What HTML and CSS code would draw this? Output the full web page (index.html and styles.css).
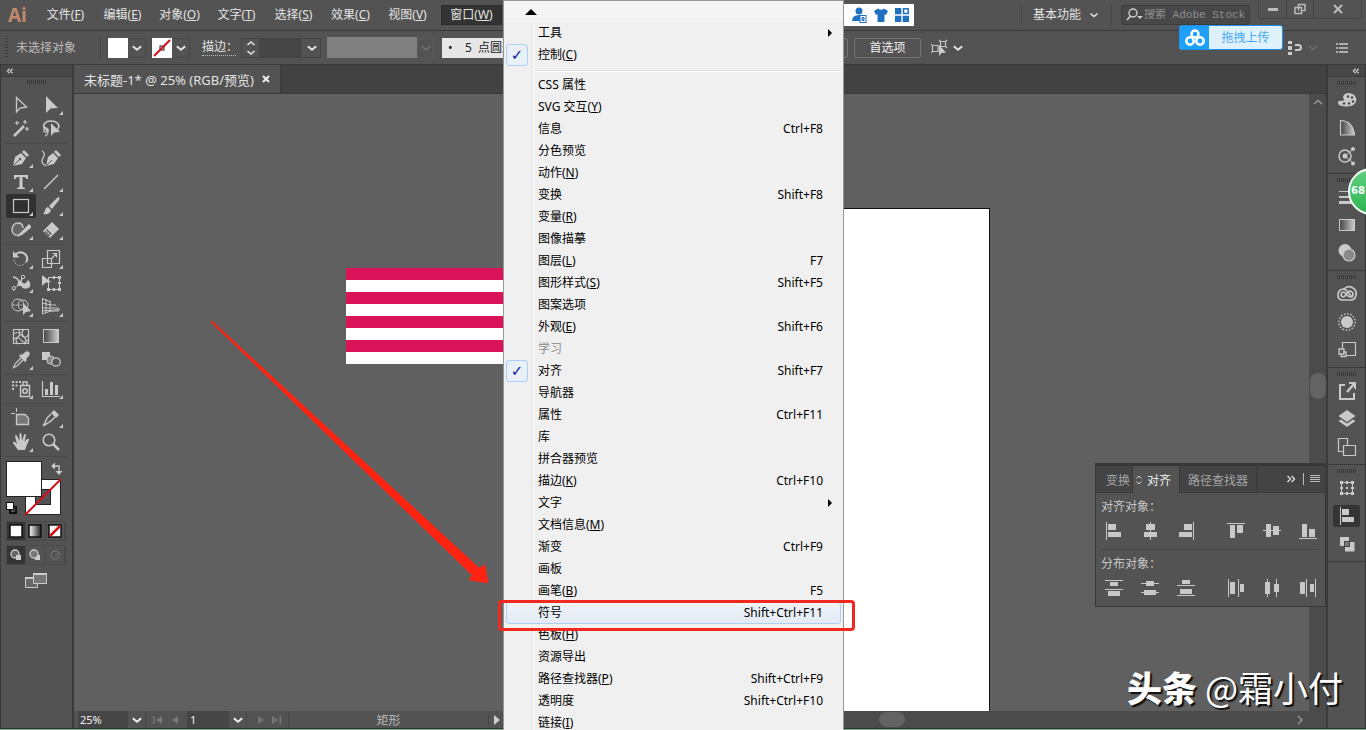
FILE: index.html
```html
<!DOCTYPE html>
<html lang="zh-CN">
<head>
    <meta charset="UTF-8">
    <meta name="viewport" content="width=device-width, initial-scale=1.0">
    <title>未标题-1</title>
    <link rel="stylesheet" href="styles.css">
</head>
<body>

    <!-- Shared shapes -->
    <svg class="defs" aria-hidden="true">
        <symbol id="chevron" viewBox="0 0 10 10"><path d="M1.5 3.5L5 6.5L8.5 3.5" fill="none" stroke="currentColor" stroke-width="1.6"/></symbol>
        <symbol id="collapse" viewBox="0 0 10 8"><path d="M4.5 1L1.5 4L4.5 7M8.5 1L5.5 4L8.5 7" fill="none" stroke="currentColor" stroke-width="1.6"/></symbol>
        <linearGradient id="fade" x1="0" x2="1"><stop offset="0" stop-color="#444"/><stop offset="1" stop-color="#ccc"/></linearGradient>
        <linearGradient id="fadeLight" x1="0" x2="1"><stop offset="0" stop-color="#fff"/><stop offset="1" stop-color="#222"/></linearGradient>
    </svg>

    <div class="app">

        <!-- Menu bar -->
        <header class="menubar">
            <span class="logo">Ai</span>
            <nav class="menus">
                <button>文件(<u>F</u>)</button>
                <button>编辑(<u>E</u>)</button>
                <button>对象(<u>O</u>)</button>
                <button>文字(<u>T</u>)</button>
                <button>选择(<u>S</u>)</button>
                <button>效果(<u>C</u>)</button>
                <button>视图(<u>V</u>)</button>
                <button class="open">窗口(<u>W</u>)</button>
            </nav>
            <div class="ime">
                <svg width="16" height="16" viewBox="0 0 16 16"><rect x="0" y="2" width="13" height="12" rx="2" fill="#1f70c1"/></svg>
                <svg width="16" height="16" viewBox="0 0 16 16"><circle cx="7" cy="4" r="3.5" fill="#1f70c1"/><path d="M0 14Q0 8 7 8Q12 8 13 10V14Z" fill="#1f70c1"/><rect x="8" y="8.5" width="6" height="7" fill="#fff" stroke="#1f70c1"/><path d="M10 10.5H12V13.5H10ZM10 12H12" fill="none" stroke="#1f70c1"/></svg>
                <svg width="16" height="16" viewBox="0 0 16 16"><path d="M1 4L5 1.5Q8 4 11 1.5L15 4L13 8L11.5 7.3V15H4.5V7.3L3 8Z" fill="#1f70c1"/></svg>
                <svg width="16" height="16" viewBox="0 0 16 16"><path d="M1 1H7.3V7.3H1ZM1 8.7H7.3V15H1ZM8.7 8.7H15V15H8.7Z" fill="#1f70c1"/><rect x="9.5" y="1.8" width="4.7" height="4.7" fill="none" stroke="#1f70c1" stroke-width="1.5"/></svg>
            </div>
            <button class="workspace-switch">基本功能 <svg width="10" height="10"><use href="#chevron"/></svg></button>
            <label class="search">
                <svg width="18" height="14" viewBox="0 0 18 14"><circle cx="7" cy="5" r="4" fill="none" stroke="currentColor" stroke-width="1.4"/><path d="M4.5 8L1 12" stroke="currentColor" stroke-width="1.6"/><path d="M11 8H17L14 11Z" fill="currentColor"/></svg>
                <input type="text" placeholder="搜索 Adobe Stock" aria-label="搜索 Adobe Stock">
            </label>
            <div class="window-buttons">
                <button aria-label="最小化"><svg width="12" height="12" viewBox="0 0 12 12"><rect x="1" y="5" width="10" height="3" fill="currentColor"/></svg></button>
                <button aria-label="还原"><svg width="12" height="12" viewBox="0 0 12 12"><path d="M4.5 7.5V1.5H11V7.5H8.5M1 4.5H7.5V10.5H1Z" fill="none" stroke="currentColor" stroke-width="1.5"/></svg></button>
                <button aria-label="关闭"><svg width="12" height="12" viewBox="0 0 12 12"><path d="M2 2L10 10M10 2L2 10" stroke="currentColor" stroke-width="2"/></svg></button>
            </div>
        </header>

        <!-- Control bar -->
        <div class="control-bar">
            <span class="grip-v"></span>
            <span class="selection">未选择对象</span>
            <button class="swatch" aria-label="填色">
                <svg width="20" height="20"><rect width="20" height="20" fill="#fff"/></svg>
                <svg width="12" height="12"><use href="#chevron"/></svg>
            </button>
            <button class="swatch" aria-label="描边颜色">
                <svg width="20" height="20"><rect width="20" height="20" fill="#fff"/><rect x="8" y="8" width="4" height="4" fill="none" stroke="#222"/><path d="M2 18L18 2" stroke="#d4101c" stroke-width="2"/></svg>
                <svg width="12" height="12"><use href="#chevron"/></svg>
            </button>
            <label class="stroke-label" for="strokeWidth">描边：</label>
            <div class="stroke-field">
                <button class="stepper" aria-label="步进"><svg width="10" height="16" viewBox="0 0 10 16"><path d="M1.5 5L5 2L8.5 5M1.5 11L5 14L8.5 11" fill="none" stroke="currentColor" stroke-width="1.6"/></svg></button>
                <input type="text" id="strokeWidth">
                <button class="drop" aria-label="描边粗细"><svg width="12" height="12"><use href="#chevron"/></svg></button>
            </div>
            <div class="profile"></div>
            <button class="drop off" aria-label="变量宽度配置文件" disabled><svg width="12" height="12"><use href="#chevron"/></svg></button>
            <select class="brush" aria-label="画笔定义"><option>•&nbsp;&nbsp;&nbsp;&nbsp;5&nbsp;&nbsp;点圆形</option></select>
            <button class="outline-btn" aria-label="文档设置"></button>
            <button class="outline-btn">首选项</button>
            <button class="plain" aria-label="选择类似对象">
                <svg width="18" height="18" viewBox="0 0 18 18"><path d="M1.5 6.5H7V12.5H1.5ZM9.5 2.5H14.5V7.5H9.5ZM0 5L2 7M0 14L2 12M14.5 2.5L16 1M9.5 2.5L8 1M14.5 7.5L16 9" fill="none" stroke="#c4c4c4" stroke-width="1.2"/><path d="M8 6V17L10.5 14L15 13.5Z" fill="#ccc"/></svg>
                <svg width="12" height="12"><use href="#chevron"/></svg>
            </button>
            <div class="control-end">
                <svg width="16" height="16" viewBox="0 0 16 16"><path d="M1 1H5V4H1ZM1 6H5V10H1ZM1 12H5V15H1ZM8 4H12Q15 4.5 15 7.5Q15 10.5 12 11H8V9H11.5Q13 8.5 13 7.5Q13 6.5 11.5 6H8Z" fill="#ccc"/></svg>
                <svg class="dim" width="10" height="10"><use href="#chevron"/></svg>
                <svg class="list" width="12" height="10" viewBox="0 0 12 10"><path d="M0 1H2M3 1H12M0 5H2M3 5H12M0 9H2M3 9H12" stroke="#ccc" stroke-width="1.3"/></svg>
            </div>
        </div>

        <div class="workspace">

            <!-- Tools -->
            <aside class="tools">
                <div class="panel-top"><svg width="8" height="6"><use href="#collapse"/></svg></div>
                <div class="grip"></div>
                <div class="tool-group">
                    <button aria-label="选择"><svg viewBox="0 0 20 20"><path d="M5.5 2.5V17L9 13L15.5 12Z" fill="none" stroke="currentColor" stroke-width="1.3"/></svg></button>
                    <button class="more" aria-label="直接选择"><svg viewBox="0 0 20 20"><path d="M5 1V18L9.500 13.500L17 13Z" fill="currentColor"/></svg></button>
                    <button aria-label="魔棒"><svg viewBox="0 0 20 20"><path d="M3 17L13 7" stroke="currentColor" stroke-width="2.5"/><path d="M6 2V6M4 4H8M14 1V5M12 3H16M16 8V12M14 10H18" stroke="currentColor" stroke-width="1.2"/></svg></button>
                    <button aria-label="套索"><svg viewBox="0 0 20 20"><path d="M6 11C0 8 3 2 10 2S20 7 16 11" fill="none" stroke="currentColor" stroke-width="1.6"/><path d="M3 11Q3 8 5.500 9Q8 11 5 13Q2 13 3 11M7 10Q8 15 4 17" fill="none" stroke="currentColor" stroke-width="1.3"/><path d="M10 4V17L13 13.500L19 13Z" fill="currentColor"/></svg></button>
                </div>
                <div class="tool-group">
                    <button class="more" aria-label="钢笔"><svg viewBox="0 0 20 20"><path d="M2 18L4 9L10 5L15 10L11 16ZM11 4L13 2L18 7L16 9Z" fill="currentColor"/><path d="M2 18L8 12" stroke="#535353"/><circle cx="9" cy="11" r="1.2" fill="#535353"/></svg></button>
                    <button aria-label="曲率"><svg viewBox="0 0 20 20"><path d="M5 18L7 9L12 5L17 10L13 16ZM13 4L15 2L20 7L18 9Z" fill="currentColor"/><path d="M5 18L11 12" stroke="#535353"/><path d="M1 3Q5 5 2 10T5 18" fill="none" stroke="currentColor" stroke-width="1.3"/></svg></button>
                    <button class="more" aria-label="文字"><svg viewBox="0 0 20 20"><path d="M3 3H17V7H15.5Q15 5 13 5H11.5V15L14 16V17H6V16L8.5 15V5H7Q5 5 4.5 7H3Z" fill="currentColor"/></svg></button>
                    <button class="more" aria-label="直线段"><svg viewBox="0 0 20 20"><path d="M3 17L17 3" stroke="currentColor" stroke-width="1.5"/></svg></button>
                    <button class="more active" aria-label="矩形"><svg viewBox="0 0 20 20"><rect x="2.5" y="3.5" width="15" height="13" fill="none" stroke="currentColor" stroke-width="1.2"/></svg></button>
                    <button class="more" aria-label="画笔"><svg viewBox="0 0 20 20"><path d="M18 1Q19 2 18 4L11 13L8 10L16 2Q17 1 18 1ZM7 11L10 14Q9 19 2 18Q4 16 4 14Q5 11 7 11Z" fill="currentColor"/></svg></button>
                    <button class="more" aria-label="Shaper"><svg viewBox="0 0 20 20"><path d="M8 15Q1 16 1 9Q2 3 7 3Q12 3 12 8" fill="#666" stroke="currentColor" stroke-width="1.4"/><path d="M6 17L9 13L18 4L21 7L11 15Z" fill="currentColor"/></svg></button>
                    <button class="more" aria-label="橡皮擦"><svg viewBox="0 0 20 20"><path d="M11 2L18 9L9 18L2 11Z" fill="currentColor"/><path d="M5.5 9.5L10.5 14.5M4 11.500L8.500 16" stroke="#535353" stroke-width="1.3"/></svg></button>
                </div>
                <div class="tool-group">
                    <button class="more" aria-label="旋转"><svg viewBox="0 0 20 20"><path d="M4 6Q9 1 14 5Q18 9 15 13" fill="none" stroke="currentColor" stroke-width="2"/><path d="M2 2V8.5H8.5Z" fill="currentColor"/><path d="M15 13Q10 19 5 15Q3 13 3 9" fill="none" stroke="currentColor" stroke-dasharray="1.5 1.5"/></svg></button>
                    <button class="more" aria-label="比例缩放"><svg viewBox="0 0 20 20"><path d="M6.5 1.5H18.5V14.5H6.5ZM1.5 9.5H10.5V18.5H1.5ZM10 10L15 5M11.5 4.5H15.5V8.5" fill="none" stroke="currentColor" stroke-width="1.2"/></svg></button>
                    <button class="more" aria-label="宽度"><svg viewBox="0 0 20 20"><path d="M1 17Q6 16 7 9Q10 7 12 10Q14 12 17 7Q20 9 19 14Q13 18 10 13Q7 11 3 18Z" fill="currentColor"/><path d="M2 4Q7 4 9 11M12 3L8 13" fill="none" stroke="currentColor" stroke-width="1.6"/><circle cx="12" cy="4" r="1.7" fill="#535353" stroke="currentColor"/><circle cx="3" cy="15" r="1.7" fill="#535353" stroke="currentColor"/></svg></button>
                    <button aria-label="自由变换"><svg viewBox="0 0 20 20"><path d="M7.5 4.5H18.5V16.5H7.5Z" fill="none" stroke="currentColor"/><path d="M1 2V13L4 10L10 9Z" fill="currentColor"/><path d="M17 3H20V6H17ZM17 15H20V18H17ZM6 15H9V18H6ZM12 3H14V6H12ZM12 15H14V18H12ZM17 9H20V11H17Z" fill="currentColor"/></svg></button>
                    <button class="more" aria-label="形状生成器"><svg viewBox="0 0 20 20"><circle cx="7" cy="8" r="6" fill="none" stroke="currentColor"/><circle cx="12" cy="8" r="5" fill="none" stroke="currentColor"/><path d="M2 8H14" stroke="currentColor" stroke-dasharray="1.5 1"/><path d="M12 6V18L15 15L20 14Z" fill="currentColor"/></svg></button>
                    <button class="more" aria-label="透视网格"><svg viewBox="0 0 20 20"><path d="M1.5 1V17M5 2V16M9 4V15M1 1.5L10 5M1 6L10 8M1 11H18M1 17L10 14H18M9 8H15M1 14L19 12.5" fill="none" stroke="currentColor"/></svg></button>
                </div>
                <div class="tool-group">
                    <button aria-label="网格"><svg viewBox="0 0 20 20"><path d="M2.5 3.5H17.5V17.5H2.5ZM2 9Q6 4 10 9T18 8M2 14Q6 9 10 14T18 13M7 3Q11 8 7 11T7 18M13 3Q9 7 13 11T13 18" fill="none" stroke="currentColor" stroke-width="1.2"/></svg></button>
                    <button aria-label="渐变"><svg viewBox="0 0 20 20"><rect x="2.5" y="3.5" width="15" height="13" fill="url(#fade)" stroke="currentColor"/></svg></button>
                    <button class="more" aria-label="吸管"><svg viewBox="0 0 20 20"><path d="M13 3Q16 0 18 2T17 7L15 9L16 10L14 12L8 6L10 4L11 5Z" fill="currentColor"/><path d="M10 8L4 14L2.5 17.5L6 16L12 10" fill="none" stroke="currentColor" stroke-width="1.3"/></svg></button>
                    <button aria-label="混合"><svg viewBox="0 0 20 20"><rect x="1" y="2" width="8" height="8" fill="currentColor"/><rect x="6" y="6" width="7" height="8" rx="3" fill="#888" stroke="currentColor"/><circle cx="15" cy="12" r="4.2" fill="#535353" stroke="currentColor" stroke-width="1.3"/></svg></button>
                </div>
                <div class="tool-group">
                    <button class="more" aria-label="符号喷枪"><svg viewBox="0 0 20 20"><path d="M9.5 6.5H18.5V17.5H9.5ZM12 6V3H16V6" fill="none" stroke="currentColor" stroke-width="1.4"/><circle cx="14" cy="12" r="2.3" fill="none" stroke="currentColor" stroke-width="1.6"/><path d="M1 3H3M4.5 3H6.5M8 3H10M1 6.5H3M4.5 6.5H6.5M1 10H3" stroke="currentColor" stroke-width="2"/></svg></button>
                    <button class="more" aria-label="柱形图"><svg viewBox="0 0 20 20"><path d="M1.5 2V17.5H19" fill="none" stroke="currentColor" stroke-width="1.2"/><path d="M4 10H7V16H4ZM9 3H12V16H9ZM14 6H17V16H14Z" fill="currentColor"/></svg></button>
                </div>
                <div class="tool-group">
                    <button aria-label="画板"><svg viewBox="0 0 20 20"><path d="M0 5.500H4M5.500 0V4" stroke="currentColor"/><path d="M5.5 6.5H14L17.5 10V16.5H5.5Z" fill="#777" stroke="currentColor" stroke-width="1.3"/></svg></button>
                    <button class="more" aria-label="切片"><svg viewBox="0 0 20 20"><path d="M13 2L18 7L15 10L10 5Z" fill="currentColor"/><path d="M10 6L6 10Q5 14 2 18Q9 14 11 12L14 9" fill="none" stroke="currentColor" stroke-width="1.4"/></svg></button>
                    <button class="more" aria-label="抓手"><svg viewBox="0 0 20 20"><path d="M7 18L2 11Q2 9 4 10L6 12L4 4Q5 2 6 4L8.5 9L8.500 2Q9.5 0 10.5 2L11 9L13 3Q14 1 15 3L13.5 10L16 7Q18 6 18 8L15 15L14 18Z" fill="currentColor"/></svg></button>
                    <button aria-label="缩放"><svg viewBox="0 0 20 20"><circle cx="8" cy="8" r="5.8" fill="none" stroke="currentColor" stroke-width="1.5"/><path d="M12 12L18 18" stroke="currentColor" stroke-width="2.5"/></svg></button>
                </div>
                <svg class="fill-stroke" width="60" height="61" viewBox="0 0 60 61">
                    <path d="M19.5 19.5H54.5V54.5H19.5Z" fill="#fff" stroke="#222"/>
                    <rect x="29.5" y="29.5" width="15" height="15" fill="#535353" stroke="#222"/>
                    <path d="M19 55L55 19" stroke="#d4101c" stroke-width="2"/>
                    <rect x="0.5" y="1.5" width="35" height="35" fill="#fff" stroke="#222"/>
                    <path d="M48 6H53V12" fill="none" stroke="#ccc" stroke-width="1.3"/><path d="M49 2.500V9.500L45 6ZM49.500 11H56.500L53 15Z" fill="#ccc"/>
                    <rect x="4" y="47" width="6" height="6" fill="none" stroke="#111" stroke-width="2"/><rect x="0.5" y="42.5" width="7" height="7" fill="#fff" stroke="#111"/>
                </svg>
                <div class="mode-row">
                    <button class="on" aria-label="颜色"><svg viewBox="0 0 14 14"><rect x="1" y="1" width="12" height="12" fill="#fff" stroke="#111" stroke-width="1.5"/></svg></button>
                    <button aria-label="渐变"><svg viewBox="0 0 14 14"><rect x="1" y="1" width="12" height="12" fill="url(#fadeLight)" stroke="#111" stroke-width="1.5"/></svg></button>
                    <button aria-label="无"><svg viewBox="0 0 14 14"><rect x="1" y="1" width="12" height="12" fill="#fff" stroke="#111" stroke-width="1.5"/><path d="M2 12L12 2" stroke="#d4101c" stroke-width="2.5"/></svg></button>
                </div>
                <div class="mode-row">
                    <button class="on" aria-label="正常绘图"><svg viewBox="0 0 14 14"><circle cx="6" cy="6" r="4" fill="#666" stroke="#ccc" stroke-width="1.3"/><path d="M7 7H12V12H7Z" fill="#ccc"/></svg></button>
                    <button aria-label="背面绘图"><svg viewBox="0 0 14 14"><path d="M7 7H12V12H7Z" fill="#ccc"/><circle cx="6" cy="6" r="4" fill="#777" stroke="#ccc" stroke-width="1.3"/></svg></button>
                    <button aria-label="内部绘图"><svg viewBox="0 0 14 14"><circle cx="7" cy="7" r="4" fill="none" stroke="#707070" stroke-width="1.3"/><path d="M7 7H9" stroke="#707070"/></svg></button>
                </div>
                <button class="screen-mode" aria-label="屏幕模式"><svg width="22" height="16" viewBox="0 0 22 16"><path d="M0.5 5.5H12.5V15.5H0.5Z" fill="#666" stroke="#ccc"/><path d="M0 6H12" stroke="#ccc" stroke-width="2"/><path d="M8.5 1.5H21.5V11.5H8.5Z" fill="#777" stroke="#ccc"/><path d="M8 2H22" stroke="#ccc" stroke-width="2"/></svg></button>
            </aside>

            <!-- Document -->
            <main class="document">
                <div class="tabs">
                    <div class="tab">未标题-1* @ 25% (RGB/预览)
                        <button aria-label="关闭文档"><svg width="8" height="8" viewBox="0 0 8 8"><path d="M1 1L7 7M7 1L1 7" stroke="#eee" stroke-width="2"/></svg></button>
                    </div>
                </div>
                <div class="view">
                    <div class="canvas">
                        <div class="stripes"></div>
                        <div class="artboard"></div>
                        <svg class="arrow" width="280" height="266" viewBox="0 0 280 266"><path d="M0 0L1 0L268 247L274 244L277 262L258 259L261 254L0 1Z" fill="#ff2412" stroke="#ff2412" stroke-width="0.6"/></svg>
                    </div>
                    <div class="scroll-y">
                        <svg width="10" height="10" viewBox="0 0 10 10"><path d="M1 7L5 3.5L9 7" fill="none" stroke="#999" stroke-width="1.4"/></svg>
                        <span class="thumb"></span>
                    </div>
                </div>
                <div class="status">
                    <div class="status-left">
                        <select class="zoom" aria-label="缩放"><option>25%</option></select>
                        <span class="chev"><svg width="12" height="12"><use href="#chevron"/></svg></span>
                        <span class="nav"><svg width="30" height="10" viewBox="0 0 30 10"><path d="M1 1H2.5V9H1ZM10 1V9L4 5ZM26 1V9L20 5Z" fill="#777"/></svg></span>
                        <input class="page" type="text" value="1" aria-label="画板">
                        <span class="chev"><svg width="12" height="12"><use href="#chevron"/></svg></span>
                        <span class="nav"><svg width="30" height="10" viewBox="0 0 30 10"><path d="M5 1V9L11 5ZM19 1V9L25 5ZM26.5 1H28V9H26.5Z" fill="#777"/></svg></span>
                        <span class="tool-name">矩形</span>
                        <button class="play" aria-label="状态选项"><svg width="6" height="10" viewBox="0 0 6 10"><path d="M0 0V10L6 5Z" fill="#ccc"/></svg></button>
                    </div>
                    <div class="scroll-x">
                        <span class="thumb"></span>
                        <svg width="10" height="10" viewBox="0 0 10 10"><path d="M3 1L7 5L3 9" fill="none" stroke="#999" stroke-width="1.4"/></svg>
                    </div>
                </div>

                <!-- Align panel -->
                <section class="align-panel">
                    <div class="align-tabs">
                        <button>变换</button>
                        <button class="current"><svg width="6" height="10" viewBox="0 0 6 10"><path d="M0.5 3.500L3 1L5.5 3.500M0.5 6.500L3 9L5.5 6.500" fill="none" stroke="#ddd"/></svg>对齐</button>
                        <button>路径查找器</button>
                        <div class="align-more">
                            <svg width="10" height="8" viewBox="0 0 10 8"><path d="M1.5 1L4.5 4L1.5 7M5.5 1L8.5 4L5.5 7" fill="none" stroke="#ddd" stroke-width="1.4"/></svg>
                            <svg width="17" height="12" viewBox="0 0 17 12"><path d="M0.5 0V12M7 2.5H17M7 4.500H17M7 6.5H17M7 8.5H17" stroke="#bbb"/></svg>
                        </div>
                    </div>
                    <h2>对齐对象：</h2>
                    <div class="align-row">
                        <button aria-label="左对齐"><svg viewBox="0 0 18 18"><path d="M1.5 0V18" stroke="currentColor"/><path d="M3 2H11V8H3ZM3 10H16V15H3Z" fill="currentColor"/></svg></button>
                        <button aria-label="水平居中"><svg viewBox="0 0 18 18"><path d="M9.5 0V18" stroke="currentColor"/><path d="M5 2H14V8H5ZM3 10H16V15H3Z" fill="currentColor"/></svg></button>
                        <button aria-label="右对齐"><svg viewBox="0 0 18 18"><path d="M16.5 0V18" stroke="currentColor"/><path d="M7 2H15V8H7ZM2 10H15V15H2Z" fill="currentColor"/></svg></button>
                        <button class="second" aria-label="顶对齐"><svg viewBox="0 0 18 18"><path d="M0 1.5H18" stroke="currentColor"/><path d="M3 3H8V16H3ZM10 3H16V11H10Z" fill="currentColor"/></svg></button>
                        <button aria-label="垂直居中"><svg viewBox="0 0 18 18"><path d="M0 8.5H18" stroke="currentColor"/><path d="M3 2H8V15H3ZM10 4H16V13H10Z" fill="currentColor"/></svg></button>
                        <button aria-label="底对齐"><svg viewBox="0 0 18 18"><path d="M0 16.5H18" stroke="currentColor"/><path d="M3 2H8V15H3ZM10 7H16V15H10Z" fill="currentColor"/></svg></button>
                    </div>
                    <hr>
                    <h2>分布对象：</h2>
                    <div class="align-row">
                        <button aria-label="垂直顶分布"><svg viewBox="0 0 18 18"><path d="M0 1.5H18M0 10.5H18" stroke="currentColor"/><path d="M5 3H13V7H5ZM3 12H15V17H3Z" fill="currentColor"/></svg></button>
                        <button aria-label="垂直居中分布"><svg viewBox="0 0 18 18"><path d="M0 4.5H18M0 13.5H18" stroke="currentColor"/><path d="M5 2H13V7H5ZM3 11H15V16H3Z" fill="currentColor"/></svg></button>
                        <button aria-label="垂直底分布"><svg viewBox="0 0 18 18"><path d="M0 6.5H18M0 16.5H18" stroke="currentColor"/><path d="M5 1H13V5H5ZM3 10H15V15H3Z" fill="currentColor"/></svg></button>
                        <button class="second" aria-label="水平左分布"><svg viewBox="0 0 18 18"><path d="M1.5 0V18M11.5 0V18" stroke="currentColor"/><path d="M3 3H8V15H3ZM13 5H17V13H13Z" fill="currentColor"/></svg></button>
                        <button aria-label="水平居中分布"><svg viewBox="0 0 18 18"><path d="M4.5 0V18M13.5 0V18" stroke="currentColor"/><path d="M2 3H7V15H2ZM11 5H16V13H11Z" fill="currentColor"/></svg></button>
                        <button aria-label="水平右分布"><svg viewBox="0 0 18 18"><path d="M7.5 0V18M16.5 0V18" stroke="currentColor"/><path d="M1 3H6V15H1ZM11 5H15V13H11Z" fill="currentColor"/></svg></button>
                    </div>
                </section>
            </main>

            <!-- Right dock -->
            <aside class="dock">
                <div class="panel-top"><svg width="8" height="6"><use href="#collapse"/></svg></div>
                <div class="dock-group">
                    <div class="grip"></div>
                    <button aria-label="颜色"><svg viewBox="0 0 20 20"><path d="M12 3Q19 4 19.5 10Q18 17 9 16.5Q0 16 1 12Q2 10 5 11Q8 11 6 7Q7 3 12 3Z" fill="currentColor"/><g fill="#444"><circle cx="11" cy="6.5" r="1.2"/><circle cx="15" cy="7.5" r="1.2"/><circle cx="16" cy="11.5" r="1.2"/><circle cx="12" cy="13.5" r="1.2"/><circle cx="7" cy="13.5" r="1.2"/></g></svg></button>
                    <button aria-label="颜色参考"><svg viewBox="0 0 20 20"><path d="M3.5 17V2.5Q16 3 17.5 17Z" fill="url(#fade)" stroke="currentColor" stroke-width="1.2"/></svg></button>
                    <button aria-label="颜色主题"><svg viewBox="0 0 20 20"><circle cx="8" cy="10" r="6" fill="none" stroke="currentColor" stroke-width="1.5"/><circle cx="8" cy="10" r="2.5" fill="currentColor"/><path d="M8 10L16 3M8 10L16 17" stroke="currentColor"/><circle cx="16" cy="3" r="2" fill="currentColor"/><circle cx="16" cy="17.5" r="2" fill="currentColor"/></svg></button>
                </div>
                <div class="dock-group">
                    <div class="grip"></div>
                    <button aria-label="描边"><svg viewBox="0 0 20 20"><path d="M2 4.5H18" stroke="currentColor"/><path d="M2 10H18" stroke="currentColor" stroke-width="2"/><path d="M2 15.5H18" stroke="currentColor" stroke-width="3"/></svg></button>
                    <button aria-label="渐变"><svg viewBox="0 0 20 20"><rect x="2.5" y="4.5" width="15" height="11" fill="url(#fade)" stroke="currentColor"/></svg></button>
                    <button aria-label="透明度"><svg viewBox="0 0 20 20"><circle cx="8" cy="7.5" r="6.5" fill="currentColor"/><circle cx="12" cy="12" r="6" fill="#888" stroke="currentColor" stroke-width="1.2"/></svg></button>
                </div>
                <div class="dock-group">
                    <div class="grip"></div>
                    <button aria-label="库"><svg viewBox="0 0 20 20"><path d="M7 5Q11 1 16 4Q20 6 19 11Q18 16 14 16H6Q1 16 1 11Q1 6 6 5Q9 5 11 8L14 12M15 13Q17 10 15 8Q12 6 10 9L8 12Q5 14 4 11Q4 8 7 8L11 12Q12 13 15 13" fill="none" stroke="currentColor" stroke-width="1.7"/></svg></button>
                    <button aria-label="外观"><svg viewBox="0 0 20 20"><circle cx="10" cy="10" r="6" fill="currentColor"/><circle cx="10" cy="10" r="8.2" fill="none" stroke="currentColor" stroke-width="1.5" stroke-dasharray="1.5 1.7"/></svg></button>
                    <button aria-label="图形样式"><svg viewBox="0 0 20 20"><path d="M5.5 9V2.5H18.5V15.5H9" fill="none" stroke="currentColor" stroke-width="1.2"/><path d="M2 9H7V14H2ZM6 12H9V16.5H4V14" fill="none" stroke="currentColor" stroke-width="1.3"/></svg></button>
                </div>
                <div class="dock-group">
                    <div class="grip"></div>
                    <button aria-label="资源导出"><svg viewBox="0 0 20 20"><path d="M8 4H3V18H17V12" fill="none" stroke="currentColor" stroke-width="2"/><path d="M10 11L17 3" stroke="currentColor" stroke-width="2.5"/><path d="M12 1H19V9L17 7V3H12Z" fill="currentColor"/></svg></button>
                    <button aria-label="图层"><svg viewBox="0 0 20 20"><path d="M10 1L18.5 7L10 13L1.5 7ZM1.5 12L4 10.5L10 14.5L16 10.5L18.5 12L10 18Z" fill="currentColor"/></svg></button>
                    <button aria-label="画板"><svg viewBox="0 0 20 20"><path d="M6 14.5H1.5V1.5H10.5V8M6.5 8.5H18.5V18.5H6.5Z" fill="none" stroke="currentColor" stroke-width="1.2"/></svg></button>
                </div>
                <div class="dock-group">
                    <div class="grip"></div>
                    <button aria-label="变换"><svg viewBox="0 0 20 20"><path d="M4.5 4.5H15.5V15.5H4.5Z" fill="none" stroke="currentColor"/><path d="M3 3H6V6H3ZM9 3H11V6H9ZM14 3H17V6H14ZM3 14H6V17H3ZM9 14H11V17H9ZM14 14H17V17H14ZM3 9H6V11H3ZM14 9H17V11H14ZM9 9H11V11H9Z" fill="currentColor"/></svg></button>
                    <button class="active" aria-label="对齐"><svg viewBox="0 0 20 20"><path d="M3.5 1V19" stroke="currentColor"/><path d="M5 3H12V9H5ZM5 11H17V16H5Z" fill="currentColor"/></svg></button>
                    <button aria-label="路径查找器"><svg viewBox="0 0 20 20"><path d="M3 3H12V12H3Z" fill="currentColor"/><path d="M8 8H17.5V17.5H8Z" fill="currentColor"/><rect x="7.5" y="7.5" width="5" height="5" fill="#777" stroke="#444"/></svg></button>
                </div>
            </aside>
        </div>

        <div class="desktop-edge"></div>

        <!-- Window menu -->
        <div class="dropdown">
            <div class="scroll-up"><svg width="12" height="6" viewBox="0 0 12 6"><path d="M0 6L6 0L12 6Z"/></svg></div>
            <ul>
                <li><button>工具<svg class="sub" width="4" height="8" viewBox="0 0 4 8"><path d="M0 0V8L4 4Z"/></svg></button></li>
                <li class="checked"><button>控制(<u>C</u>)</button></li>
                <li class="line"></li>
                <li><button>CSS 属性</button></li>
                <li><button>SVG 交互(<u>Y</u>)</button></li>
                <li><button>信息<kbd>Ctrl+F8</kbd></button></li>
                <li><button>分色预览</button></li>
                <li><button>动作(<u>N</u>)</button></li>
                <li><button>变换<kbd>Shift+F8</kbd></button></li>
                <li><button>变量(<u>R</u>)</button></li>
                <li><button>图像描摹</button></li>
                <li><button>图层(<u>L</u>)<kbd>F7</kbd></button></li>
                <li><button>图形样式(<u>S</u>)<kbd>Shift+F5</kbd></button></li>
                <li><button>图案选项</button></li>
                <li><button>外观(<u>E</u>)<kbd>Shift+F6</kbd></button></li>
                <li><button disabled>学习</button></li>
                <li class="checked"><button>对齐<kbd>Shift+F7</kbd></button></li>
                <li><button>导航器</button></li>
                <li><button>属性<kbd>Ctrl+F11</kbd></button></li>
                <li><button>库</button></li>
                <li><button>拼合器预览</button></li>
                <li><button>描边(<u>K</u>)<kbd>Ctrl+F10</kbd></button></li>
                <li><button>文字<svg class="sub" width="4" height="8" viewBox="0 0 4 8"><path d="M0 0V8L4 4Z"/></svg></button></li>
                <li><button>文档信息(<u>M</u>)</button></li>
                <li><button>渐变<kbd>Ctrl+F9</kbd></button></li>
                <li><button>画板</button></li>
                <li><button>画笔(<u>B</u>)<kbd>F5</kbd></button></li>
                <li class="hot"><button>符号<kbd>Shift+Ctrl+F11</kbd></button></li>
                <li><button>色板(<u>H</u>)</button></li>
                <li><button>资源导出</button></li>
                <li><button>路径查找器(<u>P</u>)<kbd>Shift+Ctrl+F9</kbd></button></li>
                <li><button>透明度<kbd>Shift+Ctrl+F10</kbd></button></li>
                <li><button>链接(<u>I</u>)</button></li>
            </ul>
        </div>

        <button class="upload">
            <span class="upload-icon"><svg width="20" height="18" viewBox="0 0 20 18"><g fill="none" stroke="#fff" stroke-width="2.5"><circle cx="10" cy="5" r="3.5"/><circle cx="5" cy="12" r="3.7"/><circle cx="15" cy="12" r="3.7"/></g></svg></span>
            <span class="upload-text">拖拽上传</span>
        </button>

        <div class="speed-ball">68</div>

        <div class="watermark"><b>头条</b> <span>@霜小付</span></div>
    </div>

</body>
</html>
```

FILE: styles.css
```css
*, *::before, *::after {
    box-sizing: border-box;
}

body {
    margin: 0;
    font-family: "Noto Sans", "Noto Sans CJK SC", sans-serif;
    font-size: 12px;
    color: #e4e4e4;
    background-color: #535353;
}

button, input, select {
    font: inherit;
    color: inherit;
    background: none;
    border: none;
    border-radius: 0;
    margin: 0;
    padding: 0;
}

select {
    appearance: none;
}

svg {
    display: block;
    flex: none;
}

.defs {
    position: absolute;
    width: 0;
    height: 0;
}

.app {
    position: relative;
    display: flex;
    flex-direction: column;
    height: 100vh;
    overflow: hidden;
}

/* Menu bar */
.menubar {
    display: flex;
    align-items: center;
    height: 30px;
    flex: none;
    padding-right: 4px;
    background-color: #535353;
}

.logo {
    width: 37px;
    padding-left: 8px;
    font-family: "Open Sans", sans-serif;
    font-size: 19px;
    font-weight: 700;
    line-height: 28px;
    color: #c08a6c;
}

.menus {
    display: flex;
}

.menus button {
    width: 57px;
    height: 20px;
    line-height: 18px;
    text-align: center;
    white-space: nowrap;
}

.menus button.open {
    width: 61px;
    margin-left: 5px;
    background-color: #333;
    border: 1px solid #2c2c2c;
}

.ime {
    display: flex;
    align-items: center;
    gap: 5px;
    height: 22px;
    margin-left: auto;
    padding: 0 4px;
    background-color: #fff;
}

.workspace-switch {
    display: flex;
    align-items: center;
    gap: 8px;
    height: 20px;
    margin-left: 107px;
    padding: 0 12px 0 11px;
    border-left: 1px solid #454545;
    border-right: 1px solid #454545;
    line-height: 18px;
}

.search {
    display: flex;
    align-items: center;
    width: 129px;
    height: 20px;
    margin: 0 8px 0 9px;
    padding-left: 4px;
    border: 1px solid #3c3c3c;
    border-radius: 3px;
    background-color: #484848;
    color: #d0d0d0;
}

.search input {
    width: 104px;
    font-family: "Liberation Mono", "Noto Sans CJK SC", monospace;
    font-size: 11px;
}

.search input::placeholder {
    color: #909090;
}

.window-buttons {
    display: flex;
    align-self: flex-start;
    border: 1px solid #454545;
    border-top: none;
    border-radius: 0 0 3px 3px;
    color: #bbb;
}

.window-buttons button {
    display: flex;
    align-items: center;
    justify-content: center;
    width: 27px;
    height: 18px;
}

.window-buttons button + button {
    border-left: 1px solid #454545;
}

.window-buttons button:last-child {
    width: 48px;
}

/* Control bar */
.control-bar {
    display: flex;
    align-items: center;
    flex: none;
    height: 35px;
    padding-left: 5px;
    border-top: 1px solid #3a3a3a;
    border-bottom: 1px solid #3a3a3a;
    background-color: #535353;
}

.grip-v {
    width: 3px;
    height: 20px;
    background: repeating-linear-gradient(#3a3a3a 0 1px, transparent 1px 3px);
}

.selection {
    width: 93px;
    padding-left: 8px;
    line-height: 20px;
    color: #bdbdbd;
    border-right: 1px solid #484848;
}

.swatch {
    display: flex;
    align-items: center;
    gap: 3px;
    width: 39px;
    height: 20px;
    margin-left: 6px;
    border: 1px solid #484848;
}

.swatch + .swatch {
    margin-left: 5px;
}

.stroke-label {
    width: 34px;
    margin-left: 12px;
    white-space: nowrap;
    border-bottom: 1px dotted #bbb;
    line-height: 16px;
}

.stroke-field {
    display: flex;
    height: 20px;
    margin-left: 5px;
    border: 1px solid #444;
}

.stroke-field input {
    width: 44px;
    background-color: #454545;
    border-right: 1px solid #5c5c5c;
}

.stepper, .drop {
    display: flex;
    align-items: center;
    justify-content: center;
    width: 17px;
    height: 18px;
}

.drop.off {
    height: 20px;
    color: #6c6c6c;
    border: 1px solid #5a5a5a;
}

.profile {
    width: 90px;
    height: 21px;
    margin-left: 6px;
    background-color: #808080;
}

.brush {
    width: 329px;
    height: 20px;
    margin: 0 10px 0 8px;
    padding-left: 6px;
    background-color: #e6e6e6;
    color: #222;
}

.outline-btn {
    width: 67px;
    height: 20px;
    margin-right: 6px;
    border: 1px solid #747474;
    border-radius: 2px;
    line-height: 16px;
    color: #f0f0f0;
}

.plain {
    display: flex;
    align-items: center;
    gap: 3px;
    margin-left: 4px;
}

.control-end {
    display: flex;
    align-items: center;
    gap: 5px;
    margin-left: auto;
    padding-right: 18px;
}

.control-end .dim {
    color: #707070;
}

.control-end .list {
    margin-left: 13px;
}

/* Workspace */
.workspace {
    display: flex;
    flex: 1;
    min-height: 0;
}

.panel-top {
    display: flex;
    align-items: center;
    height: 12px;
    padding: 0 5px;
    background-color: #474747;
    border-bottom: 1px solid #3a3a3a;
    color: #ccc;
}

.grip {
    width: 20px;
    height: 4px;
    margin: 0 auto;
    background: repeating-linear-gradient(90deg, #3a3a3a 0 1px, transparent 1px 2px);
}

.tools {
    flex: none;
    width: 74px;
    border-left: 1px solid #3a3a3a;
    border-right: 2px solid #3a3a3a;
    background-color: #535353;
    color: #c9c9c9;
}

.tools > .grip {
    margin-top: 3px;
    margin-bottom: 9px;
}

.tool-group {
    display: grid;
    grid-template-columns: 30px 30px;
    margin: 0 5px 2px;
    padding-bottom: 2px;
    border-bottom: 1px solid #494949;
}

.tool-group button {
    position: relative;
    display: flex;
    align-items: center;
    justify-content: center;
    height: 24px;
}

.tool-group svg {
    width: 20px;
    height: 20px;
}

.tool-group button.active {
    background-color: #303030;
    border-radius: 2px;
}

.tool-group .more::after {
    content: "";
    position: absolute;
    right: 3px;
    bottom: 2px;
    border-left: 4px solid transparent;
    border-bottom: 4px solid #c9c9c9;
}

.fill-stroke {
    margin: 3px 0 0 5px;
}

.mode-row {
    display: flex;
    width: 60px;
    height: 20px;
    margin: 0 0 4px 5px;
    border: 1px solid #494949;
}

.mode-row button {
    display: flex;
    align-items: center;
    justify-content: center;
    width: 20px;
    border-right: 1px solid #494949;
}

.mode-row svg {
    width: 14px;
    height: 14px;
}

.mode-row .on {
    background-color: #353535;
}

.screen-mode {
    display: block;
    margin: 7px 0 0 24px;
}

/* Document */
.document {
    position: relative;
    display: flex;
    flex-direction: column;
    flex: 1;
    min-width: 0;
}

.tabs {
    display: flex;
    flex: none;
    height: 29px;
    background-color: #424242;
    border-bottom: 1px solid #3a3a3a;
}

.tab {
    display: flex;
    align-items: center;
    gap: 8px;
    padding: 0 10px;
    background-color: #535353;
    border-right: 1px solid #3a3a3a;
    font-size: 13px;
    white-space: nowrap;
}

.view {
    display: flex;
    flex: 1;
    min-height: 0;
}

.canvas {
    position: relative;
    flex: 1;
    overflow: hidden;
    background-color: #606060;
}

/* Artwork sits at free positions on the canvas */
.stripes {
    position: absolute;
    left: 272px;
    top: 174px;
    width: 190px;
    height: 96px;
    background: repeating-linear-gradient(#d91458 0 12px, #fff 12px 24px);
}

.artboard {
    position: absolute;
    left: 560px;
    top: 114px;
    width: 356px;
    height: 560px;
    background-color: #fff;
    border: 1px solid #111;
}

.arrow {
    position: absolute;
    left: 137px;
    top: 227px;
}

.scroll-y {
    display: flex;
    flex-direction: column;
    align-items: center;
    width: 17px;
    padding-top: 3px;
    background-color: #4b4b4b;
}

.scroll-y .thumb {
    width: 16px;
    height: 26px;
    margin-top: 266px;
    border-radius: 8px;
    background-color: #636363;
}

.status {
    display: flex;
    flex: none;
    height: 17px;
    background-color: #4b4b4b;
}

.status-left {
    display: flex;
    width: 430px;
    padding-left: 4px;
    background-color: #535353;
    color: #f0f0f0;
}

.status-left .zoom, .status-left .page {
    width: 50px;
    padding-left: 2px;
    background-color: #454545;
    font-size: 11px;
    line-height: 16px;
}

.status-left .page {
    width: 41px;
}

.status-left .chev, .status-left .nav {
    display: flex;
    align-items: center;
    justify-content: center;
    width: 18px;
    border-right: 1px solid #484848;
}

.status-left .nav {
    width: 42px;
}

.tool-name {
    flex: 1;
    line-height: 20px;
    text-align: center;
    color: #bbb;
}

.play {
    width: 16px;
    padding-left: 5px;
    border-left: 1px solid #484848;
}

.scroll-x {
    display: flex;
    align-items: center;
    justify-content: space-between;
    flex: 1;
    padding: 0 21px 0 375px;
}

.scroll-x .thumb {
    width: 26px;
    height: 15px;
    border-radius: 8px;
    background-color: #636363;
}

/* Align panel */
.align-panel {
    position: absolute;
    right: 0;
    bottom: 121px;
    width: 231px;
    height: 144px;
    border: 1px solid #383838;
    border-top-width: 3px;
    background-color: #535353;
    color: #c8c8c8;
}

.align-tabs {
    display: flex;
    height: 27px;
    background-color: #444;
    border-bottom: 1px solid #3a3a3a;
    color: #a4a4a4;
}

.align-tabs button {
    display: flex;
    align-items: center;
    height: 27px;
    padding: 0 8px;
    border-right: 1px solid #3a3a3a;
    white-space: nowrap;
}

.align-tabs button:first-child {
    padding: 0 2px 0 10px;
}

.align-tabs .current {
    gap: 5px;
    padding: 0 8px 0 3px;
    background-color: #535353;
    color: #f0f0f0;
}

.align-more {
    display: flex;
    align-items: center;
    gap: 7px;
    margin-left: auto;
    padding-right: 5px;
}

.align-panel h2 {
    margin: 0;
    padding: 4px 0 0 5px;
    font-size: 12px;
    font-weight: 400;
    line-height: 20px;
}

.align-row {
    display: flex;
    gap: 18px;
    padding: 5px 0 0 9px;
}

.align-row button, .align-row svg {
    width: 18px;
    height: 18px;
}

.align-row .second {
    margin-left: 14px;
}

.align-panel hr {
    margin: 9px 6px 0 5px;
    border: none;
    border-top: 1px solid #474747;
}

/* Dock */
.dock {
    flex: none;
    width: 40px;
    border-left: 2px solid #3a3a3a;
    border-right: 1px solid #3a3a3a;
    background-color: #535353;
    color: #c9c9c9;
}

.dock .panel-top {
    justify-content: flex-end;
}

.dock-group {
    height: 97px;
    padding-top: 4px;
    border-bottom: 1px solid #3a3a3a;
}

.dock-group .grip {
    margin-bottom: 1px;
}

.dock-group button {
    display: flex;
    align-items: center;
    justify-content: center;
    width: 27px;
    height: 28px;
    margin: 0 auto;
}

.dock-group button svg {
    width: 20px;
    height: 20px;
}

.dock-group .active {
    height: 22px;
    margin: 3px auto;
    background-color: #353535;
    border-radius: 2px;
}

.desktop-edge {
    flex: none;
    height: 2px;
    border-top: 1px solid #2b3530;
    background-color: #86a894;
}

/* Window menu */
.dropdown {
    position: absolute;
    left: 503px;
    top: 0;
    width: 341px;
    height: 100%;
    border: 1px solid #979797;
    border-bottom: none;
    background: linear-gradient(90deg, #f0f0f0 28px, #e2e3e3 28px 29px, #fff 29px 30px, #f0f0f0 30px);
    color: #000;
}

.scroll-up {
    height: 21px;
    padding: 8px 0 0 21px;
    background-color: #f4f4f4;
}

.dropdown ul {
    margin: 0;
    padding: 0 2px;
    list-style: none;
}

.dropdown li {
    position: relative;
    height: 22px;
}

.dropdown li button {
    display: flex;
    align-items: center;
    width: 100%;
    height: 22px;
    padding: 0 18px 0 32px;
    border-radius: 3px;
    line-height: 20px;
    text-align: left;
    white-space: nowrap;
}

.dropdown button:disabled {
    color: #8a8a8a;
}

.dropdown kbd {
    margin-left: auto;
    font-family: inherit;
}

.dropdown .sub {
    margin: 0 -9px 0 auto;
}

.dropdown .line {
    height: 8px;
    margin-left: 28px;
    background: linear-gradient(#e0e0e0, #e0e0e0) 0 4px / 100% 1px no-repeat, linear-gradient(#fff, #fff) 0 5px / 100% 1px no-repeat;
}

.dropdown .checked::before {
    content: "✓";
    position: absolute;
    left: 0;
    top: 0;
    width: 22px;
    height: 22px;
    border: 1px solid #aecff7;
    border-radius: 3px;
    background-color: #e9f0f8;
    font-family: "DejaVu Sans", sans-serif;
    font-size: 15px;
    font-weight: bold;
    line-height: 20px;
    text-align: center;
    color: #0c1a9a;
}

.dropdown .hot button {
    border: 1px solid #aecff7;
    padding: 0 17px 0 31px;
    background: linear-gradient(#f0f3f8, #e3ebf6);
}

.dropdown .hot::after {
    content: "";
    position: absolute;
    z-index: 1;
    left: -8px;
    right: -14px;
    top: -2px;
    height: 31px;
    border: 3px solid #f0281e;
    border-radius: 4px;
}

/* Floating things over the window */
.upload {
    position: absolute;
    right: 83px;
    top: 25px;
    display: flex;
    width: 104px;
    height: 25px;
    border: 1px solid #1e90e8;
    border-radius: 3px;
    overflow: hidden;
    background-color: #dff1fd;
}

.upload-icon {
    display: flex;
    align-items: center;
    justify-content: center;
    width: 29px;
    height: 23px;
    background-color: #1ea0fa;
}

.upload-text {
    flex: 1;
    line-height: 24px;
    color: #4aa8f0;
}

.speed-ball {
    position: absolute;
    right: -29px;
    top: 168px;
    width: 47px;
    height: 47px;
    padding-left: 1px;
    border: 2px solid #f4fff4;
    border-radius: 50%;
    background: linear-gradient(#5fd080, #2fb552);
    font-family: "DejaVu Sans", sans-serif;
    font-size: 10px;
    font-weight: bold;
    line-height: 42px;
    color: #fff;
}

.watermark {
    position: absolute;
    right: 23px;
    bottom: 18px;
    font-size: 35px;
    line-height: 50px;
    font-family: "Noto Sans CJK SC", sans-serif;
    color: #fff;
    text-shadow: 2px 2px 1px #111;
    white-space: nowrap;
}

.watermark b {
    font-weight: 900;
}
```
